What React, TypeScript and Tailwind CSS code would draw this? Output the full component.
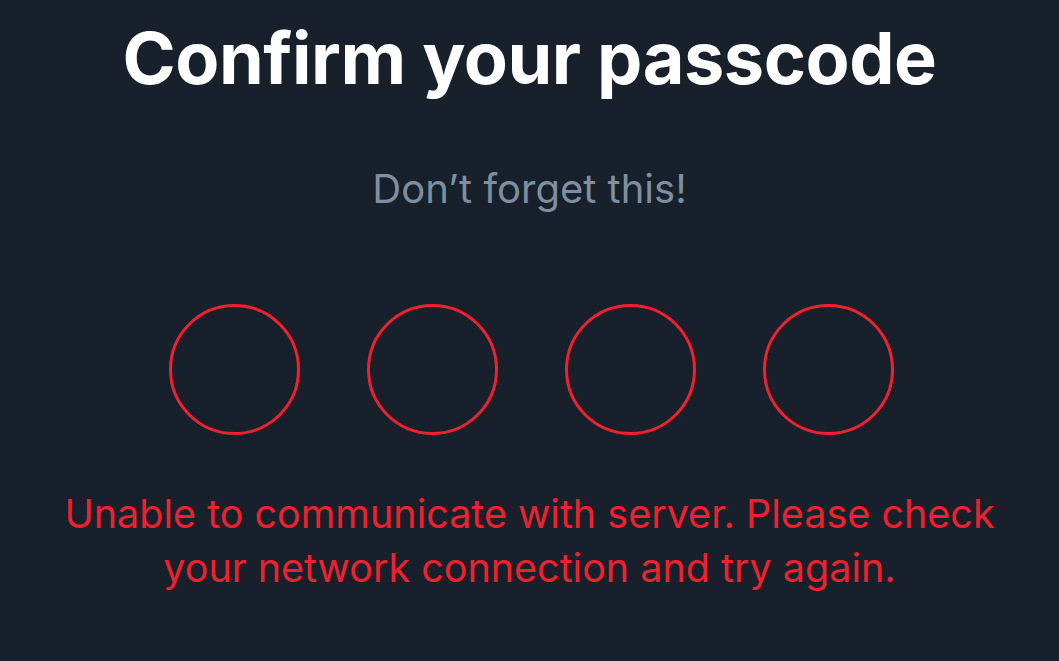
import React from 'react'

export default function App() {
  const dots = [0, 1, 2, 3]
  return (
    <div className="w-[1059px] h-[661px] bg-[#18202b] flex flex-col items-center overflow-hidden" style={{ fontFamily: 'Inter, "Noto Sans", sans-serif' }}>
      <h1 className="mt-[13px] text-[72px] leading-[90px] font-bold text-white tracking-[-0.5px]">
        Confirm your passcode
      </h1>
      <p className="mt-[64px] text-[40px] leading-[44px] text-[#7d8fa0]">Don’t forget this!</p>
      <div className="mt-[93px] ml-[3px] flex gap-[67px]">
        {dots.map((d) => (
          <div key={d} className="w-[131px] h-[131px] rounded-full border-[3px] border-[#f0202e]" />
        ))}
      </div>
      <p className="mt-[52px] text-[39.5px] leading-[54px] text-[#f0202e] text-center w-[980px]">
        Unable to communicate with server. Please check your network connection and try again.
      </p>
    </div>
  )
}
